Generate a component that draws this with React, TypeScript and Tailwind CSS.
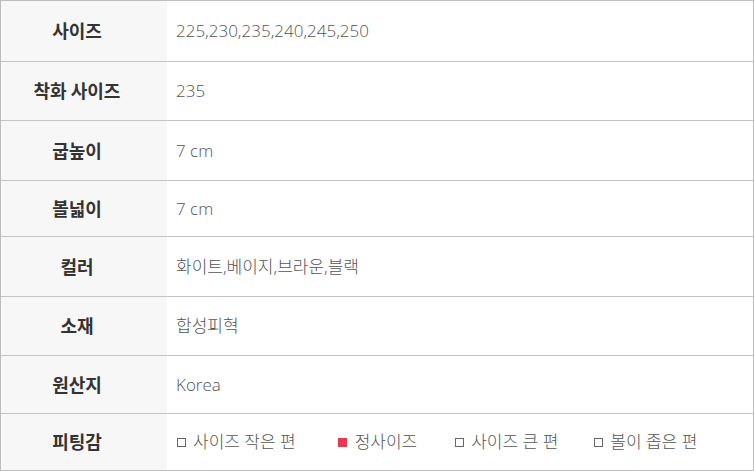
const rows: { label: string; value?: string; h: string }[] = [
  { label: "사이즈", value: "225,230,235,240,245,250", h: "h-[61px]" },
  { label: "착화 사이즈", value: "235", h: "h-[59px]" },
  { label: "굽높이", value: "7 cm", h: "h-[60px]" },
  { label: "볼넓이", value: "7 cm", h: "h-[56px]" },
  { label: "컬러", value: "화이트,베이지,브라운,블랙", h: "h-[60px]" },
  { label: "소재", value: "합성피혁", h: "h-[59px]" },
  { label: "원산지", value: "Korea", h: "h-[58px]" },
];

const fits = [
  { text: "사이즈 작은 편", on: false, cls: "mr-[42px]" },
  { text: "정사이즈", on: true, cls: "mr-[38px]" },
  { text: "사이즈 큰 편", on: false, cls: "mr-[36px]" },
  { text: "볼이 좁은 편", on: false, cls: "" },
];

function Box({ on }: { on: boolean }) {
  return on ? (
    <span className="inline-block w-[9px] h-[9px] bg-[#e63a4e] mr-[8px]" />
  ) : (
    <span className="inline-block w-[9px] h-[9px] border border-[#666] mr-[7px]" />
  );
}

export default function App() {
  const font = "font-['Open_Sans','Noto_Sans_CJK_KR',sans-serif]";
  const labelCls =
    "w-[166px] bg-[#f7f7f7] flex items-center justify-center pr-[14px] pb-[1px] text-[18px] font-bold text-[#333] font-['Noto_Sans_CJK_KR',sans-serif]";
  return (
    <div className="w-[754px] h-[471px] bg-white border-l border-r border-t border-[#bdbdbd] flex flex-col">
      {rows.map((r) => (
        <div key={r.label} className={`flex ${r.h} border-b border-[#c4c4c4]`}>
          <div className={labelCls}>{r.label}</div>
          <div className={`flex-1 flex items-center pl-[9px] text-[17px] font-light text-[#555] ${font}`}>
            {r.value}
          </div>
        </div>
      ))}
      <div className="flex h-[57px] border-b border-[#bdbdbd]">
        <div className={labelCls}>피팅감</div>
        <div className={`flex-1 flex items-center pl-[10px] text-[17px] font-light text-[#555] ${font}`}>
          {fits.map((f) => (
            <span key={f.text} className={`flex items-center ${f.cls}`}>
              <Box on={f.on} />
              {f.text}
            </span>
          ))}
        </div>
      </div>
    </div>
  );
}
